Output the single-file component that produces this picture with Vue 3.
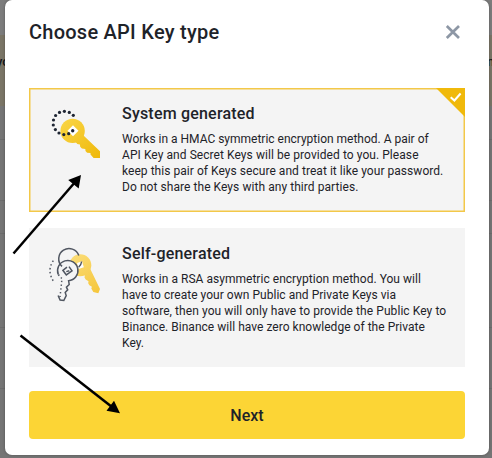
<script setup>
const options = [
  {
    id: 'system',
    title: 'System generated',
    selected: true,
    lines: [
      'Works in a HMAC symmetric encryption method. A pair of',
      'API Key and Secret Keys will be provided to you. Please',
      'keep this pair of Keys secure and treat it like your password.',
      'Do not share the Keys with any third parties.',
    ],
  },
  {
    id: 'self',
    title: 'Self-generated',
    selected: false,
    lines: [
      'Works in a RSA asymmetric encryption method. You will',
      'have to create your own Public and Private Keys via',
      'software, then you will only have to provide the Public Key to',
      'Binance. Binance will have zero knowledge of the Private',
      'Key.',
    ],
  },
]
</script>

<template>
  <div class="page">
    <div class="behind">
      <div class="strip top"></div>
      <div class="strip notice"><span>yo</span><span>n</span></div>
      <div class="strip r1"></div>
      <div class="strip r2"></div>
      <div class="strip r3"></div>
      <div class="strip r4"></div>
      <div class="strip r5"></div>
      <div class="strip r6"></div>
    </div>

    <section class="modal">
      <header class="head">
        <h1>Choose API Key type</h1>
        <svg class="close" width="16" height="16" viewBox="0 0 16 16">
          <path d="M1.8 2L14 14M14 2L1.8 14" fill="none" stroke="#8d97a5" stroke-width="2.7" />
        </svg>
      </header>

      <article v-for="o in options" :key="o.id" class="card" :class="[o.id, { selected: o.selected }]">
        <svg v-if="o.id === 'system'" class="icon" width="70" height="70" viewBox="0 0 70 70">
          <defs>
            <linearGradient id="gold" gradientUnits="userSpaceOnUse" x1="24" y1="20" x2="58" y2="58">
              <stop offset="0" stop-color="#f9d443" />
              <stop offset="1" stop-color="#efb90c" />
            </linearGradient>
          </defs>
          <circle cx="32.6" cy="30.9" r="12.2" fill="url(#gold)" />
          <path d="M43.5 35.5L60 51.2V58h-6.4l-3.1-3.4v-1.7l-3.4-.2-1.6-1.8-.2-2-3.4-.4-1.7-1.8-.3-2.3-2.6-.5-2-2.5z" fill="url(#gold)" />
          <path d="M33 25.3l5.5 5.5-5.5 5.5-5.5-5.5z" fill="#fff" />
          <g fill="#1e2533">
            <circle cx="33.3" cy="15.3" r="1.6" /><circle cx="29.3" cy="12.4" r="1.6" />
            <circle cx="24.4" cy="11.3" r="1.6" /><circle cx="19.5" cy="12.4" r="1.6" />
            <circle cx="15.6" cy="15.5" r="1.6" /><circle cx="13.5" cy="20" r="1.6" />
            <circle cx="13.3" cy="25" r="1.6" /><circle cx="15.4" cy="29.6" r="1.6" />
            <circle cx="19" cy="33" r="1.6" /><circle cx="23.8" cy="34.6" r="1.6" />
            <circle cx="28.7" cy="33.7" r="1.6" /><circle cx="32.7" cy="30.8" r="1.7" />
          </g>
        </svg>
        <svg v-else class="icon" width="70" height="70" viewBox="0 0 70 70">
          <defs>
            <linearGradient id="pale" gradientUnits="userSpaceOnUse" x1="34" y1="16" x2="58" y2="54">
              <stop offset="0" stop-color="#fbdc75" />
              <stop offset="1" stop-color="#f5c63c" />
            </linearGradient>
          </defs>
          <circle cx="40.3" cy="26.3" r="11" fill="url(#pale)" />
          <path d="M50.3 30L60 50l-1.7 4.2-5-1.2-2-3.5.6-1.8-2.5-1.5-1.2-2 .3-2-2.8-1.8-1.2-2 .4-2-3-3z" fill="url(#pale)" />
          <circle cx="28" cy="31.6" r="10.2" fill="#f4f4f4" />
          <path d="M37 24l5-1.8 1.8 6-5.3 1.8z" fill="#fff" />
          <path d="M38.6 28.2Q41.3 26 41.6 22.5" fill="none" stroke="#4b515c" stroke-width="1.4" />
          <g fill="none" stroke="#505661" stroke-width="1.5">
            <path d="M38.8 16.6A10.3 10.3 0 1 0 22 27.4" />
            <path d="M18.3 35.5A10.2 10.2 0 1 1 28.6 41.8l.6 3.7-2.8 2.7 1.3 2.7-2.5 2.5 1 3.2-2.4 4.9-3.7-.4-2-4.6" />
            <path d="M27 28.2l-4.1 3.1 3.4 4.6 5.7-4.1-3-4.2M29.3 31.8l-3 .8" />
            <path d="M18.4 35.5q1.5 2.5 3.6 4L20 58" stroke-dasharray="1.4 2.4" />
            <path d="M13.3 21.6q-7 10.3.7 21.4" stroke-dasharray="1.5 2.5" />
          </g>
        </svg>
        <div class="copy">
          <h2>{{ o.title }}</h2>
          <p><span v-for="(l, i) in o.lines" :key="i" :class="'l' + i">{{ l }}</span></p>
        </div>
        <svg v-if="o.selected" class="tick" width="29" height="29" viewBox="0 0 29 29">
          <path d="M0 0H29V29z" fill="#f0b90b" />
          <path d="M14.7 9.2l3.7 3.3 6.2-7" fill="none" stroke="#fff" stroke-width="2" />
        </svg>
      </article>

      <button class="next" type="button">Next</button>
    </section>

    <svg class="arrows" width="492" height="458" viewBox="0 0 492 458">
      <g stroke="#000" stroke-width="2.5">
        <path d="M13.5 253.5L76 181" />
        <path d="M20.5 335.5L112 407" />
      </g>
      <path d="M81 175l-2.3 13.5-10.5-8.5zM120 413.3l-6-12.6-7.5 10z" />
    </svg>
  </div>
</template>

<style>
body {
  overflow: hidden;
}
</style>

<style scoped>
.page {
  position: relative;
  width: 492px;
  height: 458px;
  overflow: hidden;
  background: #757575;
  font-family: Roboto, "Liberation Sans", sans-serif;
  color: #1e2329;
}
.behind {
  position: absolute;
  inset: 0;
}
.strip {
  box-sizing: border-box;
  border-bottom: 1px solid #6c6c6c;
}
.top { height: 35px; border: 0; background: #7c7c7c; }
.notice {
  height: 71px;
  border: 0;
  background: #7a7566;
  display: flex;
  justify-content: space-between;
  padding-top: 18px;
  font-size: 13px;
  font-weight: 500;
  line-height: 17px;
  color: #14161a;
}
.notice span { width: 14px; margin-left: -4px; }
.notice span + span { margin: 0; width: 5px; }
.r1 { height: 34px; }
.r2 { height: 61px; }
.r3 { height: 33px; }
.r4 { height: 94px; }
.r5 { height: 61px; }
.r6 { height: 69px; border: 0; }
.modal {
  position: absolute;
  left: 5px;
  top: 0;
  width: 484px;
  height: 455px;
  box-sizing: border-box;
  padding: 0 24px;
  border-radius: 7px;
  background: #fff;
  box-shadow: 0 0 3px rgba(0, 0, 0, 0.3);
}
.head {
  height: 88px;
  box-sizing: border-box;
  padding: 19px 4px 0 0;
  display: flex;
  justify-content: space-between;
}
h1 {
  margin: 0;
  font-size: 20px;
  line-height: 26px;
  font-weight: 500;
  letter-spacing: 0.25px;
}
.close { margin-top: 5px; }
.card {
  position: relative;
  box-sizing: border-box;
  width: 436px;
  display: flex;
  background: #f4f4f4;
  padding-left: 11px;
}
.system { height: 124px; margin-bottom: 16px; padding-top: 12px; }
.self { height: 139px; padding-top: 11px; margin-bottom: 24px; }
.selected { box-shadow: inset 0 0 0 1.5px #f3c848; }
.icon { flex: none; }
.copy { margin-left: 12px; padding-top: 4px; }
.self .copy { padding-top: 5px; }
h2 {
  margin: 0 0 7px;
  font-size: 16px;
  line-height: 20px;
  font-weight: 500;
  letter-spacing: 0.2px;
}
p { margin: 0; font-size: 12px; line-height: 16px; }
p span { display: block; width: max-content; white-space: nowrap; }
.system .l0 { letter-spacing: -0.01px; }
.system .l1 { letter-spacing: 0.065px; }
.system .l2 { letter-spacing: 0.045px; }
.system .l3 { letter-spacing: 0.06px; }
.self .l0 { letter-spacing: 0.03px; }
.self .l1 { letter-spacing: 0.03px; }
.self .l2 { letter-spacing: 0.075px; }
.self .l3 { letter-spacing: 0.03px; }
.tick { position: absolute; right: 0; top: 0; }
.next {
  display: block;
  width: 436px;
  height: 48px;
  padding: 1px 0 0;
  border: 0;
  border-radius: 4px;
  background: #fcd535;
  color: #1e2329;
  font: 500 16px/48px Roboto, sans-serif;
}
.arrows { position: absolute; inset: 0; }
</style>
